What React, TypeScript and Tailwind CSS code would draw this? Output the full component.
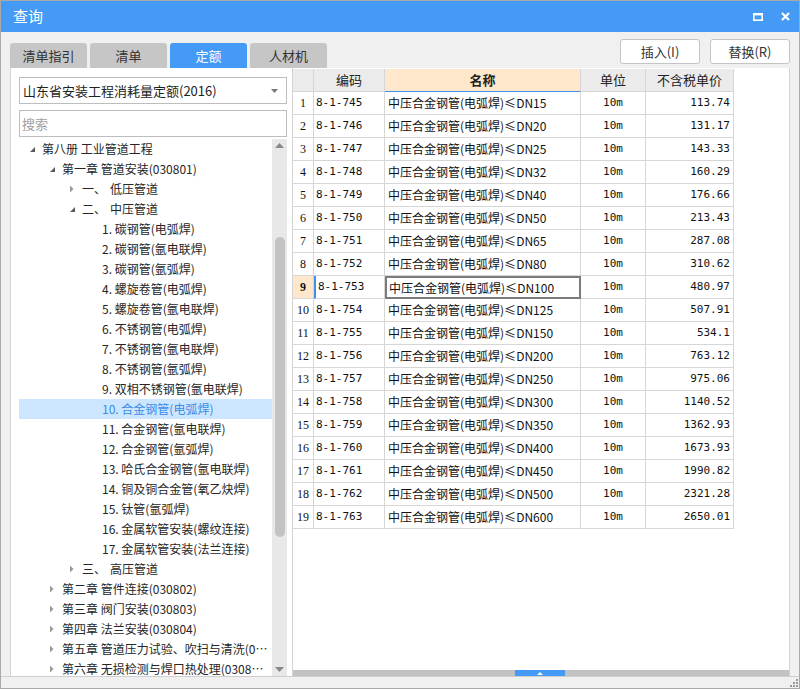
import React from 'react';

type TreeNode = { level: number; label: string; sub?: string; state?: 'open' | 'closed'; selected?: boolean };

const items = [
  '碳钢管(电弧焊)',
  '碳钢管(氩电联焊)',
  '碳钢管(氩弧焊)',
  '螺旋卷管(电弧焊)',
  '螺旋卷管(氩电联焊)',
  '不锈钢管(电弧焊)',
  '不锈钢管(氩电联焊)',
  '不锈钢管(氩弧焊)',
  '双相不锈钢管(氩电联焊)',
  '合金钢管(电弧焊)',
  '合金钢管(氩电联焊)',
  '合金钢管(氩弧焊)',
  '哈氏合金钢管(氩电联焊)',
  '铜及铜合金管(氧乙炔焊)',
  '钛管(氩弧焊)',
  '金属软管安装(螺纹连接)',
  '金属软管安装(法兰连接)',
];

const tree: TreeNode[] = [
  { level: 0, label: '第八册 工业管道工程', state: 'open' },
  { level: 1, label: '第一章 管道安装(030801)', state: 'open' },
  { level: 2, label: '一、', sub: '低压管道', state: 'closed' },
  { level: 2, label: '二、', sub: '中压管道', state: 'open' },
  ...items.map((t, i) => ({ level: 3, label: `${i + 1}. ${t}`, selected: i === 9 })),
  { level: 2, label: '三、', sub: '高压管道', state: 'closed' },
  { level: 1, label: '第二章 管件连接(030802)', state: 'closed' },
  { level: 1, label: '第三章 阀门安装(030803)', state: 'closed' },
  { level: 1, label: '第四章 法兰安装(030804)', state: 'closed' },
  { level: 1, label: '第五章 管道压力试验、吹扫与清洗(030805)', state: 'closed' },
  { level: 1, label: '第六章 无损检测与焊口热处理(030806)', state: 'closed' },
];

const rows: [string, string, string][] = [
  ['745', 'DN15', '113.74'],
  ['746', 'DN20', '131.17'],
  ['747', 'DN25', '143.33'],
  ['748', 'DN32', '160.29'],
  ['749', 'DN40', '176.66'],
  ['750', 'DN50', '213.43'],
  ['751', 'DN65', '287.08'],
  ['752', 'DN80', '310.62'],
  ['753', 'DN100', '480.97'],
  ['754', 'DN125', '507.91'],
  ['755', 'DN150', '534.1'],
  ['756', 'DN200', '763.12'],
  ['757', 'DN250', '975.06'],
  ['758', 'DN300', '1140.52'],
  ['759', 'DN350', '1362.93'],
  ['760', 'DN400', '1673.93'],
  ['761', 'DN450', '1990.82'],
  ['762', 'DN500', '2321.28'],
  ['763', 'DN600', '2650.01'],
];

const indent = ['pl-[10px]', 'pl-[30px]', 'pl-[50px]', 'pl-[83px]'];

function Arrow({ state }: { state?: 'open' | 'closed' }) {
  if (state === 'open') {
    return (
      <svg width="13" height="8" viewBox="0 0 13 8" className="shrink-0">
        <path d="M1 7 L6 7 L6 2 Z" fill="#5a5a5a" />
      </svg>
    );
  }
  return (
    <svg width="13" height="8" viewBox="0 0 13 8" className="shrink-0">
      <path d="M1 0.5 L4.5 4 L1 7.5 Z" fill="#9a9a9a" />
    </svg>
  );
}

function Tabs() {
  const tabs = ['清单指引', '清单', '定额', '人材机'];
  return (
    <div className="flex gap-[3px] mt-[11px]">
      {tabs.map((t) => (
        <div
          key={t}
          className={
            t === '定额'
              ? 'w-[77px] h-[25px] rounded-t-[3px] bg-[#449af5] text-white flex items-center justify-center text-[13px]'
              : 'w-[77px] h-[25px] rounded-t-[3px] bg-[#c6c6c6] text-[#333] flex items-center justify-center text-[13px]'
          }
        >
          {t}
        </div>
      ))}
    </div>
  );
}

function TreePanel() {
  return (
    <div className="w-[283px] bg-white border-l border-r border-[#d4d4d4] flex flex-col pl-[8px] pr-[5px]">
      <div className="mt-[9px] h-[27px] border border-[#bdbdbd] flex items-center justify-between pl-[3px] pr-[8px] text-[13px] text-[#222]">
        <span>山东省安装工程消耗量定额(2016)</span>
        <svg width="7" height="4" viewBox="0 0 7 4">
          <path d="M0 0 L7 0 L3.5 4 Z" fill="#777" />
        </svg>
      </div>
      <div className="mt-[6px] h-[27px] border border-[#bdbdbd] flex items-center pl-[2px] text-[13px] text-[#a0a0a0]">
        搜索
      </div>
      <div className="mt-[2px] flex-1 flex min-h-0 overflow-hidden">
        <div className="flex-1 min-w-0 overflow-hidden pr-[4px]">
          {tree.map((n, i) => (
            <div
              key={i}
              className={
                'h-[20px] flex items-center text-[12px] whitespace-nowrap ' +
                indent[n.level] +
                (n.selected ? ' bg-[#cce6ff] text-[#3a8be6] -mr-[4px]' : ' text-[#262626]')
              }
            >
              {n.state && <Arrow state={n.state} />}
              <span className="truncate min-w-0">{n.label}</span>
              {n.sub && <span className="ml-[4px]">{n.sub}</span>}
            </div>
          ))}
        </div>
        <div className="w-[15px] bg-[#e8e8e8] flex flex-col items-center">
          <svg width="9" height="5" viewBox="0 0 9 5" className="mt-[4px]">
            <path d="M0 5 L9 5 L4.5 0 Z" fill="#888" />
          </svg>
          <div className="mt-[89px] w-[10px] h-[300px] rounded-full bg-[#c3c3c3]" />
          <div className="flex-1" />
          <svg width="9" height="5" viewBox="0 0 9 5" className="mb-[4px]">
            <path d="M0 0 L9 0 L4.5 5 Z" fill="#888" />
          </svg>
        </div>
      </div>
    </div>
  );
}

const cols = 'grid grid-cols-[21px_71px_196px_65px_88px]';
const cell = 'border-r border-b border-[#d6d6d6] h-[23px] flex items-center';
const mono = { fontFamily: '"DejaVu Sans Mono", "Noto Sans CJK SC", monospace' };

function Table() {
  return (
    <div className="flex-1 bg-white border-r border-[#d4d4d4] flex flex-col">
      <div className="flex-1 min-h-0 pt-[1px]">
        <div className={cols + ' w-[441px] text-[13px] text-[#222]'}>
          <div className={cell + ' bg-[#ebebeb]'} />
          <div className={cell + ' bg-[#ebebeb] justify-center'}>编码</div>
          <div className="border-r border-b border-b-[#3d8ff0] border-r-[#d6d6d6] h-[23px] flex items-center justify-center bg-[#fee7cb] font-bold">
            名称
          </div>
          <div className={cell + ' bg-[#ebebeb] justify-center'}>单位</div>
          <div className={cell + ' bg-[#ebebeb] justify-center'}>不含税单价</div>
        </div>
        {rows.map(([code, dn, price], i) => {
          const sel = i === 8;
          return (
            <div key={code} className={cols + ' w-[441px] text-[#111]'}>
              <div
                className={
                  cell +
                  ' justify-center text-[12px] ' +
                  (sel ? 'bg-[#fee7cb] font-bold' : '')
                }
                style={{ fontFamily: '"Liberation Serif", serif' }}
              >
                {i + 1}
              </div>
              <div
                className={cell + ' text-[11px] pl-[2px] ' + (sel ? 'border-l-2 border-l-[#3d8ff0] pl-0' : '')}
                style={mono}
              >
                8-1-{code}
              </div>
              <div
                className={
                  sel
                    ? 'h-[23px] flex items-center border-2 border-[#7c7c7c] pl-[2px] text-[12px]'
                    : cell + ' pl-[3px] text-[12px]'
                }
                style={{ fontFamily: '"Noto Sans CJK SC", sans-serif' }}
              >
                中压合金钢管(电弧焊)≤{dn}
              </div>
              <div className={cell + ' justify-center text-[11px]'} style={mono}>
                10m
              </div>
              <div className={cell + ' justify-end pr-[3px] text-[11px]'} style={mono}>
                {price}
              </div>
            </div>
          );
        })}
      </div>
      <div className="h-[6px] bg-[#c2c2c2] flex">
        <div className="ml-[222px] w-[50px] h-[6px] bg-[#449af5] flex items-center justify-center">
          <svg width="6" height="3" viewBox="0 0 6 3">
            <path d="M0 3 L6 3 L3 0 Z" fill="#fff" />
          </svg>
        </div>
      </div>
    </div>
  );
}

export default function App() {
  return (
    <div
      className="w-[800px] h-[689px] border border-[#a9a9a9] bg-[#f0f0f0] flex flex-col"
      style={{ fontFamily: '"Noto Sans CJK SC", "Noto Sans", sans-serif' }}
    >
      <div className="h-[31px] bg-[#449af5] flex items-center justify-between pl-[12px] pr-[9px]">
        <span className="text-white text-[15px]">查询</span>
        <div className="flex items-center gap-[18px]">
          <svg width="10" height="8" viewBox="0 0 10 8">
            <rect x="0.8" y="1.2" width="8.4" height="6" fill="none" stroke="#fff" strokeWidth="1.6" />
            <rect x="0" y="0" width="10" height="2.4" fill="#fff" />
          </svg>
          <svg width="9" height="9" viewBox="0 0 9 9">
            <path d="M1 1 L8 8 M8 1 L1 8" stroke="#fff" strokeWidth="2.2" />
          </svg>
        </div>
      </div>
      <div className="h-[36px] flex justify-between pl-[9px] pr-[9px]">
        <Tabs />
        <div className="flex gap-[10px] mt-[7px]">
          <div className="w-[80px] h-[25px] bg-white border border-[#c4c4c4] rounded-[3px] flex items-center justify-center text-[13px] text-[#333]">
            插入(I)
          </div>
          <div className="w-[80px] h-[25px] bg-white border border-[#c4c4c4] rounded-[3px] flex items-center justify-center text-[13px] text-[#333]">
            替换(R)
          </div>
        </div>
      </div>
      <div className="h-[609px] flex pl-[9px] pr-[9px] border-b border-[#cfcfcf]">
        <TreePanel />
        <Table />
      </div>
      <div className="flex-1 flex justify-end items-end pr-[1px] pb-[1px]">
        <svg width="9" height="9" viewBox="0 0 9 9">
          <g fill="#9a9a9a">
            <rect x="7" y="1" width="2" height="2" />
            <rect x="4" y="4" width="2" height="2" />
            <rect x="7" y="4" width="2" height="2" />
            <rect x="1" y="7" width="2" height="2" />
            <rect x="4" y="7" width="2" height="2" />
            <rect x="7" y="7" width="2" height="2" />
          </g>
        </svg>
      </div>
    </div>
  );
}
